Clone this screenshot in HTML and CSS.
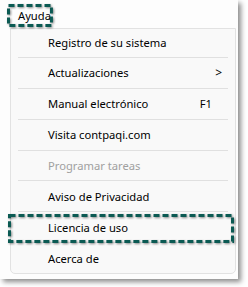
FILE: index.html
```html
<!DOCTYPE html>
<html lang="es">
<head>
<meta charset="utf-8">
<link rel="stylesheet" href="styles.css">
</head>
<body>
<div class="window">
  <div class="menubar">
    <div class="menu-title">Ayuda
      <div class="mark"><svg aria-hidden="true"><rect class="mark-rect"/></svg></div>
    </div>
  </div>
  <div class="dropdown">
    <div class="item first"><span>Registro de su sistema</span></div>
    <div class="sep"></div>
    <div class="item"><span>Actualizaciones</span><span class="arrow">&gt;</span></div>
    <div class="sep"></div>
    <div class="item"><span>Manual electrónico</span><span class="shortcut">F1</span></div>
    <div class="sep"></div>
    <div class="item"><span>Visita contpaqi.com</span></div>
    <div class="sep"></div>
    <div class="item disabled"><span>Programar tareas</span></div>
    <div class="sep"></div>
    <div class="item"><span>Aviso de Privacidad</span></div>
    <div class="sep"></div>
    <div class="item marked"><span>Licencia de uso</span>
      <div class="mark"><svg aria-hidden="true"><rect class="mark-rect"/></svg></div>
    </div>
    <div class="sep"></div>
    <div class="item"><span>Acerca de</span></div>
  </div>
</div>
</body>
</html>
```

FILE: styles.css
```css
html, body {
  margin: 0;
  padding: 0;
  background: #ffffff;
}
body {
  width: 248px;
  height: 287px;
  overflow: hidden;
  font-family: "Noto Sans", "Open Sans", sans-serif;
  font-size: 11.2px;
  color: #000000;
}
.window {
  width: 238px;
  height: 279px;
  background: #fdfdfd;
  box-shadow: 3px 3px 5px rgba(0, 0, 0, 0.45);
  display: flex;
  flex-direction: column;
}
.menubar {
  height: 28px;
  display: flex;
  align-items: center;
  padding-left: 18px;
}
.menu-title {
  position: relative;
  line-height: 16px;
  margin-top: 4px;
}
.menu-title .mark {
  left: -11px;
  right: -2px;
  top: -4px;
  bottom: -3px;
}
.dropdown {
  margin-left: 10px;
  width: 224px;
  height: 244px;
  border: 1px solid #e2e2e2;
  border-radius: 0 0 5px 5px;
  background: #f9f9f9;
  display: flex;
  flex-direction: column;
}
.item {
  position: relative;
  height: 30px;
  display: flex;
  align-items: center;
  justify-content: space-between;
  padding-left: 37px;
  padding-right: 13px;
}
.item.first {
  height: 28px;
}
.item.disabled {
  color: #a0a0a0;
}
.arrow {
  font-size: 12px;
}
.shortcut {
  margin-right: 10px;
}
.sep {
  height: 1px;
  background: #e0e0e0;
  margin: 0 7px;
}
.item.marked .mark {
  left: -3px;
  right: 1px;
  top: 2px;
  bottom: -1px;
}
.mark {
  position: absolute;
  filter: drop-shadow(1px 1px 1px rgba(0, 0, 0, 0.45));
  pointer-events: none;
}
.mark svg {
  display: block;
  width: 100%;
  height: 100%;
  overflow: visible;
}
.mark-rect {
  x: 1.5px;
  y: 1.5px;
  width: calc(100% - 3px);
  height: calc(100% - 3px);
  fill: none;
  stroke: #0b5a53;
  stroke-width: 3;
  stroke-dasharray: 6 3;
}
```
